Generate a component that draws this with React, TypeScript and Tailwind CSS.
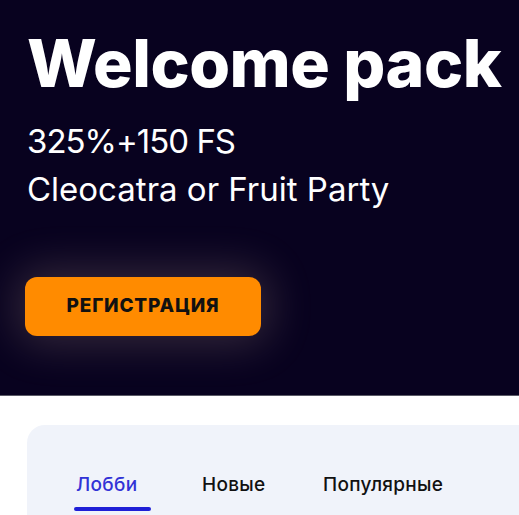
import React from 'react';

const App: React.FC = () => {
  const tabs = [
    { label: 'Лобби', w: 'w-[126px]' },
    { label: 'Новые', w: 'w-[121px]' },
    { label: 'Популярные', w: 'w-auto' },
  ];

  return (
    <div className="w-[519px] h-[515px] overflow-hidden bg-white" style={{ fontFamily: 'Inter, "Noto Sans", sans-serif' }}>
      <div className="h-[396px] bg-[#08021f] border-b border-[#5a5a66] pl-[27px] pt-[27px] text-white">
        <h1 className="text-[66px] leading-[72px] font-extrabold tracking-[-0.5px]">Welcome pack</h1>
        <p className="mt-[22px] text-[33px] leading-[40px] tracking-[-1px]">325%+150 FS</p>
        <p className="mt-[8px] text-[33px] leading-[40px] tracking-[0px]">Cleocatra or Fruit Party</p>
        <button className="mt-[68px] -ml-[2px] w-[236px] h-[59px] rounded-[12px] bg-[#ff8b00] text-[#111] text-[19px] font-extrabold tracking-[0.8px] shadow-[0_0_45px_8px_rgba(255,220,190,0.18)]">
          РЕГИСТРАЦИЯ
        </button>
      </div>
      <div className="pt-[29px] pl-[27px]">
        <div className="h-[100px] bg-[#f0f3fa] rounded-tl-[18px] pl-[49px] pt-[47px] flex">
          {tabs.map((t, i) => (
            <div key={t.label} className={`flex flex-col ${t.w}`}>
              <span className={`text-[19px] leading-[26px] font-medium tracking-[0.3px] ${i === 0 ? 'text-[#3232d6]' : 'text-[#111]'}`}>{t.label}</span>
              {i === 0 && <span className="mt-[9px] -ml-[2px] h-[4px] w-[77px] rounded-full bg-[#1f1fd6]" />}
            </div>
          ))}
        </div>
      </div>
    </div>
  );
};

export default App;
